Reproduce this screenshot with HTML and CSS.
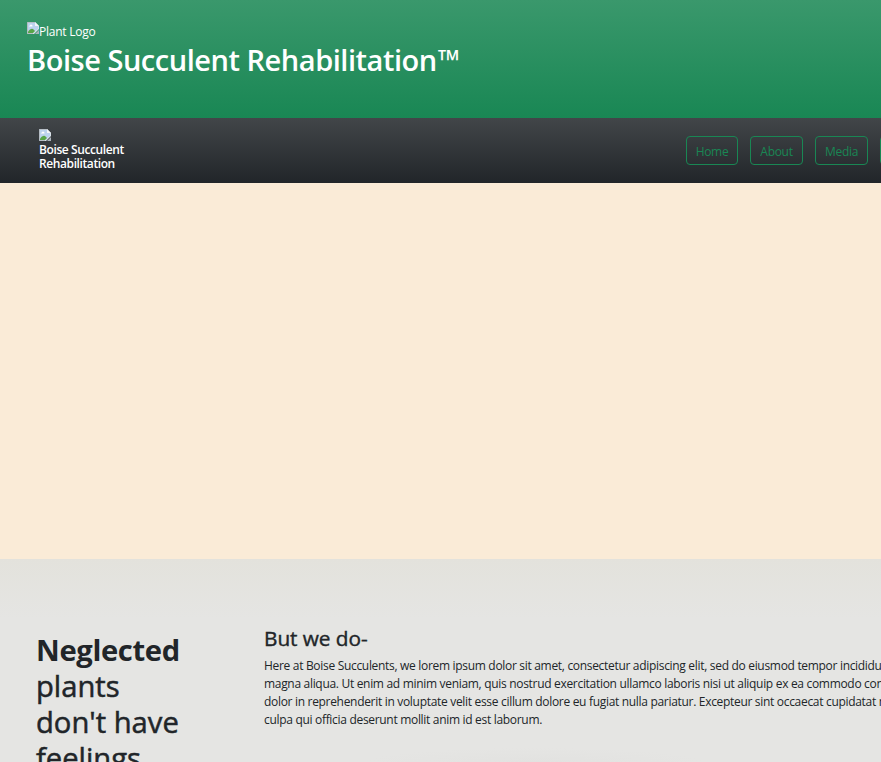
FILE: index.html
```html
<!DOCTYPE html>
<html lang="en">
<head>
<meta charset="utf-8">
<title>Boise Succulent Rehabilitation</title>
<link rel="stylesheet" href="styles.css">
</head>
<body>
<svg width="0" height="0" class="defs" aria-hidden="true">
  <symbol id="picture" viewBox="0 0 12 12">
    <path d="M0 0h8l4 4v3L7 12H0z" fill="#d9e2ea"/>
    <path d="M1 1h7v3h3v3L6 11H1z" fill="#bdd3ee"/>
    <path d="M2 4.500q0-1 1-1 .4-1.300 1.600-.8 1 .2.900 1.800z" fill="#fff"/>
    <path d="M1 11V9.500Q3.500 6 6 7l2 2-2 2z" fill="#58a548"/>
    <path d="M8 0v4h4z" fill="#f3f5f7"/>
    <path d="M0 0h8v.8H.8V12H0zM0 11.200h6V12H0z" fill="#aab3ba"/>
    <path d="M12 8v4H8z" fill="#aab3ba"/>
  </symbol>
</svg>
<header class="banner">
  <div class="logo"><svg class="picture"><use href="#picture"/></svg><span>Plant Logo</span></div>
  <h1>Boise Succulent Rehabilitation<span class="tm">™</span></h1>
</header>
<nav class="navbar">
  <div class="brand">
    <svg class="picture"><use href="#picture"/></svg>
    <span>Boise Succulent<br>Rehabilitation</span>
  </div>
  <div class="links">
    <a class="btn home">Home</a>
    <a class="btn">About</a>
    <a class="btn">Media</a>
    <a class="btn"></a>
  </div>
</nav>
<section class="hero"></section>
<main class="content">
  <h2 class="statement"><b>Neglected</b><br>plants<br>don't have<br>feelings</h2>
  <article class="about">
    <h3>But we do-</h3>
    <p>Here at Boise Succulents, we lorem ipsum dolor sit amet, consectetur adipiscing elit, sed do eiusmod tempor incididunt<br>magna aliqua. Ut enim ad minim veniam, quis nostrud exercitation ullamco laboris nisi ut aliquip ex ea commodo consequat<br>dolor in reprehenderit in voluptate velit esse cillum dolore eu fugiat nulla pariatur. Excepteur sint occaecat cupidatat non<br>culpa qui officia deserunt mollit anim id est laborum.</p>
  </article>
</main>
</body>
</html>
```
FILE: styles.css
```css
* { box-sizing: border-box; }
html { height: 762px; overflow: hidden; }
body {
  margin: 0;
  height: 762px;
  overflow: hidden;
  background: #e5e5e3;
  color: #212529;
  font: 12px/18px "Open Sans", "Noto Sans", sans-serif;
}
h1, h2, h3, p { margin: 0; font-weight: 400; white-space: nowrap; }
.defs { position: absolute; }
.picture { display: block; width: 12px; height: 12px; flex: none; }
.banner {
  height: 118px;
  padding: 22px 27px 0;
  color: #fff;
  background: linear-gradient(#3a986c, #198754);
}
.logo { display: flex; height: 20px; }
.logo span { line-height: 20px; letter-spacing: -.25px; }
h1 { font-size: 29px; line-height: 35px; font-weight: 600; letter-spacing: -.47px; }
.tm { margin-left: 1px; }
.navbar {
  display: flex;
  justify-content: space-between;
  height: 65px;
  padding: 11px 0 0 39px;
  background: linear-gradient(#424649, #212529);
}
.brand { color: #fff; font-weight: 600; line-height: 14px; letter-spacing: -.4px; }
.brand span { display: block; margin-top: 2px; }
.links { display: flex; gap: 12px; width: 195px; padding-top: 7px; overflow: hidden; }
.btn {
  flex: none;
  width: 53px;
  height: 29px;
  border: 1px solid #198754;
  border-radius: 4px;
  color: #198754;
  line-height: 29px;
  letter-spacing: -.3px;
  text-align: center;
}
.home { width: 52px; }
.hero { height: 376px; background: #faebd7; }
.content {
  display: flex;
  height: 203px;
  padding: 67px 0 0 36px;
  overflow: hidden;
  background:
    radial-gradient(ellipse 170px 14px at 535px 100%, #e2e2e0, transparent),
    linear-gradient(#e3e2dc, #e5e5e3 60px);
}
.statement {
  flex: none;
  width: 228px;
  padding-top: 6px;
  font-size: 29.2px;
  line-height: 36px;
  -webkit-text-stroke: .5px;
}
.statement b { letter-spacing: -.35px; -webkit-text-stroke: 0; }
.about { min-width: 0; overflow: hidden; }
.about h3 { font-size: 20.8px; line-height: 25px; letter-spacing: -.05px; -webkit-text-stroke: .4px; }
.about p { padding-top: 6px; letter-spacing: -.31px; }
```
